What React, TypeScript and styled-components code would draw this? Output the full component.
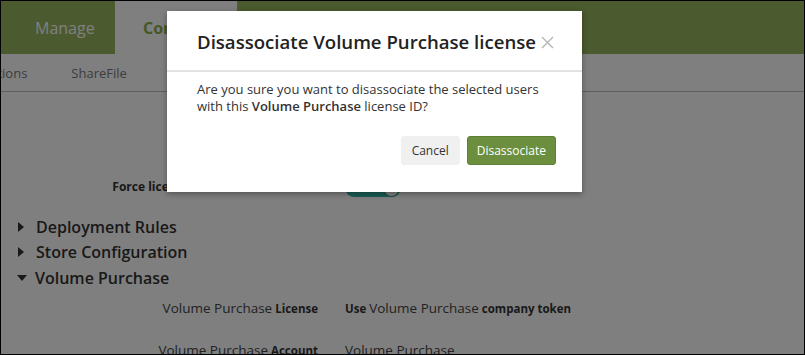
import styled, { createGlobalStyle } from 'styled-components';

const GlobalStyle = createGlobalStyle`
  html, body {
    margin: 0;
    padding: 0;
    background: #fff;
  }
  body {
    font-family: 'Open Sans', 'Noto Sans', sans-serif;
    color: #333;
  }
`;

type Row = {
  label: string;
  value: string;
};

const rows: Row[] = [
  { label: 'License', value: 'company token' },
  { label: 'Account', value: '' },
];

function Mixed({ prefix, suffix }: { prefix?: string; suffix?: string }) {
  return (
    <>
      {prefix && <Strong>{prefix} </Strong>}
      <Plain>Volume Purchase</Plain>
      {suffix && <Strong> {suffix}</Strong>}
    </>
  );
}

function App() {
  return (
    <Frame>
      <GlobalStyle />
      <Header>
        <Tab>Manage</Tab>
        <Tab $active>Configure</Tab>
      </Header>
      <SubNav>
        <SubItem>Actions</SubItem>
        <SubItem>ShareFile</SubItem>
        <SubItem>Enrollment</SubItem>
      </SubNav>
      <Content>
        <ToggleRow>
          <FieldLabel>Force license association to device</FieldLabel>
          <Toggle>
            <ToggleText>ON</ToggleText>
            <Knob />
          </Toggle>
        </ToggleRow>
        <Sections>
          <Section>
            <Caret />
            Deployment Rules
          </Section>
          <Section>
            <Caret />
            Store Configuration
          </Section>
          <Section>
            <Caret $open />
            Volume Purchase
          </Section>
        </Sections>
        <Fields>
          {rows.map((r) => (
            <FieldRow key={r.label}>
              <FieldLabel>
                <Mixed suffix={r.label} />
              </FieldLabel>
              <FieldValue>
                {r.value ? <Mixed prefix="Use" suffix={r.value} /> : <Mixed />}
              </FieldValue>
            </FieldRow>
          ))}
        </Fields>
      </Content>

      <Backdrop />
      <Modal>
        <ModalHeader>
          <Title>Disassociate Volume Purchase license</Title>
          <Close aria-label="close">
            <svg width="13" height="13" viewBox="0 0 13 13">
              <path d="M1 1 L12 12 M12 1 L1 12" stroke="#b5b5b5" strokeWidth="1.4" fill="none" />
            </svg>
          </Close>
        </ModalHeader>
        <ModalBody>
          Are you sure you want to disassociate the selected users with this{' '}
          <b>Volume Purchase</b> license ID?
        </ModalBody>
        <ModalFooter>
          <Button>Cancel</Button>
          <Button $primary>Disassociate</Button>
        </ModalFooter>
      </Modal>
    </Frame>
  );
}

export default App;

const Frame = styled.div`
  position: relative;
  width: 805px;
  height: 355px;
  box-sizing: border-box;
  border: 1px solid #000;
  overflow: hidden;
  background: #fff;
`;

const Header = styled.div`
  display: flex;
  height: 53px;
  background: #96b45e;
`;

const Tab = styled.div<{ $active?: boolean }>`
  display: flex;
  align-items: center;
  width: ${({ $active }) => ($active ? '122px' : '114px')};
  padding-left: ${({ $active }) => ($active ? '28px' : '34px')};
  box-sizing: border-box;
  font-size: 16px;
  color: ${({ $active }) => ($active ? '#8cb04a' : '#fff')};
  font-weight: ${({ $active }) => ($active ? 700 : 400)};
  background: ${({ $active }) => ($active ? '#fff' : 'transparent')};
  white-space: nowrap;
  overflow: hidden;
`;

const SubNav = styled.div`
  display: flex;
  align-items: center;
  gap: 44px;
  height: 37px;
  padding-left: 0;
  margin-left: -18px;
  border-bottom: 1px solid #bcbcbc;
  font-size: 13px;
  color: #7a7a7a;
`;

const SubItem = styled.span``;

const Content = styled.div`
  display: flex;
  flex-direction: column;
`;

const ToggleRow = styled.div`
  display: grid;
  grid-template-columns: 317px auto;
  column-gap: 27px;
  align-items: center;
  margin-top: 83px;
  height: 20px;
`;

const FieldLabel = styled.div`
  text-align: right;
  font-size: 12px;
  font-weight: 700;
  color: #333;
  white-space: nowrap;
`;

const Toggle = styled.div`
  width: 56px;
  height: 18px;
  margin-top: 4px;
  border-radius: 9px;
  background: #34bcaa;
  display: flex;
  align-items: center;
  justify-content: space-between;
  padding: 0 2px 0 12px;
  box-sizing: border-box;
`;

const ToggleText = styled.span`
  font-size: 10px;
  font-weight: 700;
  color: #fff;
`;

const Knob = styled.span`
  width: 15px;
  height: 15px;
  border-radius: 50%;
  background: #fff;
  box-shadow: 0 0 0 1px #2a9a8a;
`;

const Sections = styled.div`
  display: flex;
  flex-direction: column;
  margin-top: 19px;
`;

const Section = styled.div`
  display: flex;
  align-items: center;
  height: 25.5px;
  padding-left: 17px;
  font-size: 16px;
  font-weight: 600;
  color: #333;
`;

const Caret = styled.span<{ $open?: boolean }>`
  width: 0;
  height: 0;
  margin-right: 12px;
  ${({ $open }) =>
    $open
      ? `border-left: 5px solid transparent; border-right: 5px solid transparent; border-top: 6px solid #333; margin-left: -1px; margin-right: 8px;`
      : `border-top: 5px solid transparent; border-bottom: 5px solid transparent; border-left: 6px solid #333;`}
`;

const Fields = styled.div`
  display: flex;
  flex-direction: column;
  gap: 22px;
  margin-top: 7px;
`;

const FieldRow = styled.div`
  display: grid;
  grid-template-columns: 317px auto;
  column-gap: 27px;
  align-items: center;
  height: 20px;
`;

const FieldValue = styled.div`
  font-size: 12px;
  font-weight: 700;
  color: #333;
  white-space: nowrap;
`;

const Strong = styled.span`
  font-size: 11.5px;
  font-weight: 700;
`;

const Plain = styled.span`
  font-size: 13.5px;
  font-weight: 400;
  color: #444;
`;

const Backdrop = styled.div`
  position: absolute;
  inset: 0;
  background: rgba(0, 0, 0, 0.5);
`;

const Modal = styled.div`
  position: absolute;
  left: 166px;
  top: 10px;
  width: 415px;
  height: 181px;
  background: #fff;
  box-shadow: 0 2px 6px rgba(0, 0, 0, 0.35);
  display: flex;
  flex-direction: column;
`;

const ModalHeader = styled.div`
  display: flex;
  align-items: center;
  justify-content: space-between;
  height: 57px;
  padding: 2px 28px 0 30px;
  border-bottom: 2px solid #e2e2e2;
`;

const Title = styled.h2`
  margin: 0;
  font-size: 18.6px;
  font-weight: 600;
  color: #222;
  white-space: nowrap;
`;

const Close = styled.span`
  display: flex;
  margin-top: 1px;
`;

const ModalBody = styled.div`
  padding: 9px 40px 0 30px;
  font-size: 13px;
  line-height: 17px;
  color: #333;
  b {
    font-weight: 600;
  }
`;

const ModalFooter = styled.div`
  display: flex;
  justify-content: flex-end;
  gap: 7px;
  padding: 0 26px;
  margin-top: 21px;
`;

const Button = styled.button<{ $primary?: boolean }>`
  height: 29px;
  padding: 0 ${({ $primary }) => ($primary ? '9px' : '10px')};
  border-radius: 3px;
  font-family: inherit;
  font-size: 12px;
  border: 1px solid ${({ $primary }) => ($primary ? '#5d7f33' : '#f0f0f0')};
  background: ${({ $primary }) => ($primary ? '#6b8f3e' : '#f0f0f0')};
  color: ${({ $primary }) => ($primary ? '#fff' : '#333')};
`;
